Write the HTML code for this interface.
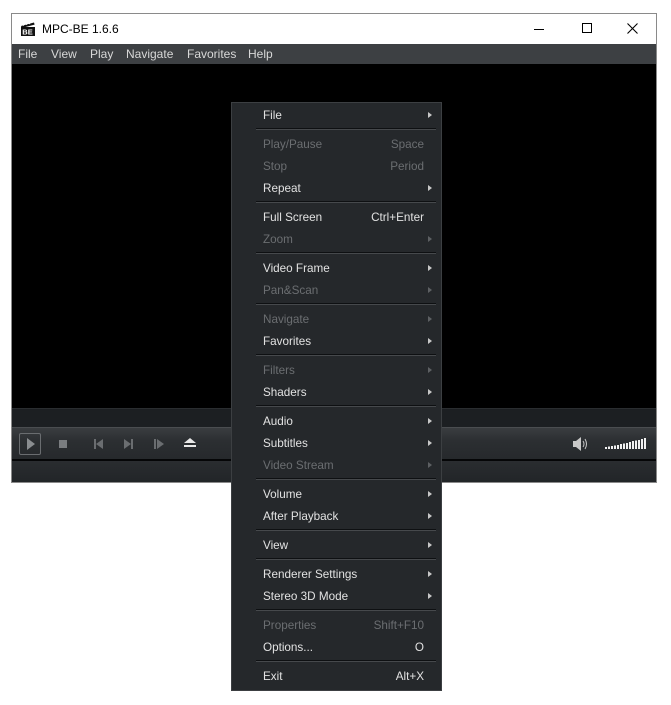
<!DOCTYPE html>
<html><head><meta charset="utf-8"><style>
*{margin:0;padding:0;box-sizing:border-box}
body{width:671px;height:705px;background:#fff;position:relative;overflow:hidden;font-family:"Liberation Sans",sans-serif}
.win{position:absolute;left:11px;top:13px;width:646px;height:470px;border:1px solid #8a8a8a;background:#fff}
.title{position:absolute;left:0;top:0;width:644px;height:30px;background:#fff}
.title .t{position:absolute;left:30px;top:8px;font-size:12px;color:#000}
.menubar{position:absolute;left:0;top:30px;width:644px;height:20px;background:#3d4043;color:#d8d8d8;font-size:12px}
.menubar span{position:absolute;top:3px}
.video{position:absolute;left:0;top:50px;width:644px;height:344px;background:#000}
.seek{position:absolute;left:0;top:394px;width:644px;height:19px;background:#1c1f22;border-top:1px solid #2a2d30}
.ctrl{position:absolute;left:0;top:413px;width:644px;height:32px;background:linear-gradient(#3a3d40,#2c2f32 40%,#26292c);border-top:1px solid #4a4d50}
.blk{position:absolute;left:0;top:445px;width:644px;height:2px;background:#050607}
.status{position:absolute;left:0;top:447px;width:644px;height:21px;background:linear-gradient(#2a2d30,#222528)}
.menu{position:absolute;left:231px;top:102px;width:211px;height:589px;background:#25282b;border:1px solid #3c3f42;padding-top:1px}
.it{height:22px;position:relative;font-size:11.7px;color:#e2e2e2}
.it.d{color:#6b6e71}
.it .l{position:absolute;left:31px;top:5px}
.it .r{position:absolute;right:17px;top:5px}
.it .a{position:absolute;left:196px;top:8px;width:0;height:0;border-left:4px solid #c8c8c8;border-top:3px solid transparent;border-bottom:3px solid transparent}
.it.d .a{border-left-color:#5d6063}
.sep{height:7px;position:relative}
.sep:after{content:"";position:absolute;left:24px;right:5px;top:2px;height:1px;background:#0e1012;border-bottom:1px solid #46494c;box-sizing:content-box}
</style></head><body>
<div class="win">
 <div class="title">
  <svg style="position:absolute;left:8px;top:7px" width="16" height="16" viewBox="0 0 16 16"><rect x="1" y="6" width="14" height="9" fill="#111"/><path d="M1 5 L14 1.5 L14.6 3.6 L1.6 7z" fill="#111"/><path d="M3 4.6 L4.5 3.2 M6 3.8 L7.5 2.4 M9 3 L10.5 1.6" stroke="#fff" stroke-width="1"/><text x="2.3" y="13.6" font-size="7.5" font-weight="bold" fill="#fff" font-family="Liberation Sans">BE</text></svg>
  <span class="t">MPC-BE 1.6.6</span>
  <div style="position:absolute;left:522px;top:15px;width:10px;height:1px;background:#000"></div>
  <div style="position:absolute;left:570px;top:9px;width:10px;height:10px;border:1px solid #000"></div>
  <svg style="position:absolute;left:615px;top:9px" width="11" height="11"><path d="M0.5 0.5L10.5 10.5M10.5 0.5L0.5 10.5" stroke="#000" stroke-width="1.1"/></svg>
 </div>
 <div class="menubar">
  <span style="left:6px">File</span><span style="left:39px">View</span><span style="left:78px">Play</span><span style="left:114px">Navigate</span><span style="left:175px">Favorites</span><span style="left:236px">Help</span>
 </div>
 <div class="video"></div>
 <div class="seek"></div>
 <div class="ctrl">
  <div style="position:absolute;left:7px;top:5px;width:22px;height:22px;border:1px solid #6a6d70;border-radius:2px"></div>
  <svg style="position:absolute;left:0;top:0" width="200" height="32">
   <path d="M15 10 L23 16 L15 22z" fill="#8a8d90"/>
   <rect x="47" y="12" width="8" height="8" fill="#7a7d80"/>
   <rect x="82" y="11" width="2" height="10" fill="#6a6d70"/><path d="M91 11 L84 16 L91 21z" fill="#6a6d70"/>
   <path d="M112 11 L119 16 L112 21z" fill="#6a6d70"/><rect x="119" y="11" width="2" height="10" fill="#6a6d70"/>
   <rect x="142" y="11" width="2" height="10" fill="#6a6d70"/><path d="M145 11 L152 16 L145 21z" fill="#6a6d70"/>
   <path d="M178 10 L184 15 L172 15z" fill="#e8e8e8"/><rect x="172" y="17" width="12" height="2" fill="#e8e8e8"/>
  </svg>
  <svg style="position:absolute;left:556px;top:0" width="90" height="32">
   <rect x="5" y="13" width="3" height="6" fill="#c8c8c8"/><path d="M8 13 L13 9 L13 23 L8 19z" fill="#c8c8c8"/>
   <path d="M15 13 Q17 16 15 19 M17 11 Q20 16 17 21" stroke="#c8c8c8" fill="none" stroke-width="1"/>
   <g fill="#f0f0f0">
    <rect x="37" y="19" width="2" height="2"/><rect x="40" y="18.5" width="2" height="2.5"/><rect x="43" y="18" width="2" height="3"/><rect x="46" y="17.5" width="2" height="3.5"/><rect x="49" y="17" width="2" height="4"/><rect x="52" y="16" width="2" height="5"/><rect x="55" y="15.5" width="2" height="5.5"/><rect x="58" y="15" width="2" height="6"/><rect x="61" y="14" width="2" height="7"/><rect x="64" y="13" width="2" height="8"/><rect x="67" y="12.5" width="2" height="8.5"/><rect x="70" y="12" width="2" height="9"/><rect x="73" y="11" width="2" height="10"/><rect x="76" y="10" width="2" height="11"/>
   </g>
  </svg>
 </div>
 <div class="blk"></div>
 <div class="status"></div>
</div>
<div class="menu">
 <div class="it"><span class="l">File</span><i class="a"></i></div>
 <div class="sep"></div>
 <div class="it d"><span class="l">Play/Pause</span><span class="r">Space</span></div>
 <div class="it d"><span class="l">Stop</span><span class="r">Period</span></div>
 <div class="it"><span class="l">Repeat</span><i class="a"></i></div>
 <div class="sep"></div>
 <div class="it"><span class="l">Full Screen</span><span class="r">Ctrl+Enter</span></div>
 <div class="it d"><span class="l">Zoom</span><i class="a"></i></div>
 <div class="sep"></div>
 <div class="it"><span class="l">Video Frame</span><i class="a"></i></div>
 <div class="it d"><span class="l">Pan&amp;Scan</span><i class="a"></i></div>
 <div class="sep"></div>
 <div class="it d"><span class="l">Navigate</span><i class="a"></i></div>
 <div class="it"><span class="l">Favorites</span><i class="a"></i></div>
 <div class="sep"></div>
 <div class="it d"><span class="l">Filters</span><i class="a"></i></div>
 <div class="it"><span class="l">Shaders</span><i class="a"></i></div>
 <div class="sep"></div>
 <div class="it"><span class="l">Audio</span><i class="a"></i></div>
 <div class="it"><span class="l">Subtitles</span><i class="a"></i></div>
 <div class="it d"><span class="l">Video Stream</span><i class="a"></i></div>
 <div class="sep"></div>
 <div class="it"><span class="l">Volume</span><i class="a"></i></div>
 <div class="it"><span class="l">After Playback</span><i class="a"></i></div>
 <div class="sep"></div>
 <div class="it"><span class="l">View</span><i class="a"></i></div>
 <div class="sep"></div>
 <div class="it"><span class="l">Renderer Settings</span><i class="a"></i></div>
 <div class="it"><span class="l">Stereo 3D Mode</span><i class="a"></i></div>
 <div class="sep"></div>
 <div class="it d"><span class="l">Properties</span><span class="r">Shift+F10</span></div>
 <div class="it"><span class="l">Options...</span><span class="r">O</span></div>
 <div class="sep"></div>
 <div class="it"><span class="l">Exit</span><span class="r">Alt+X</span></div>
</div>
</body></html>
